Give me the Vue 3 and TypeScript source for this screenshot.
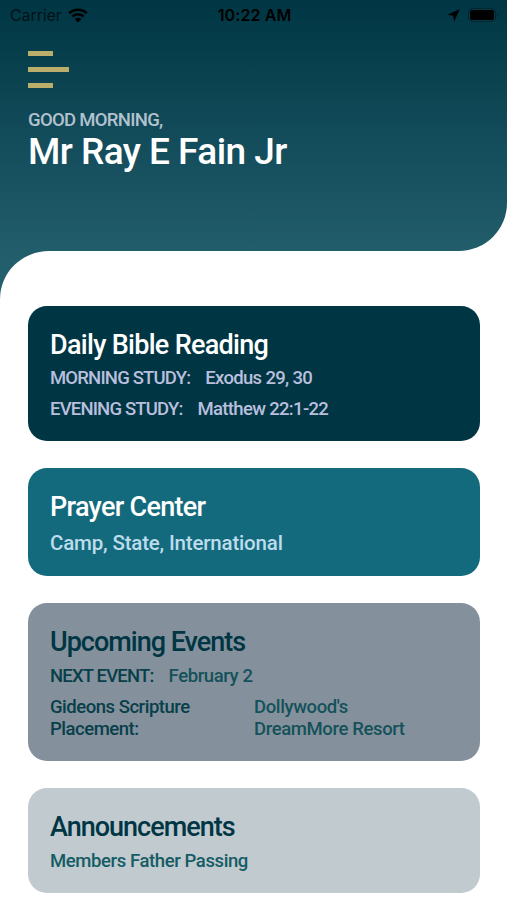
<script setup lang="ts">
interface Entry {
  label?: string
  value: string
}

interface Card {
  id: string
  title: string
  entries: Entry[]
  columns?: [string[], string[]]
}

const user = { greeting: 'GOOD MORNING,', name: 'Mr Ray E Fain Jr' }

const cards: Card[] = [
  {
    id: 'reading',
    title: 'Daily Bible Reading',
    entries: [
      { label: 'MORNING STUDY:', value: 'Exodus 29, 30' },
      { label: 'EVENING STUDY:', value: 'Matthew 22:1-22' },
    ],
  },
  {
    id: 'prayer',
    title: 'Prayer Center',
    entries: [{ value: 'Camp, State, International' }],
  },
  {
    id: 'events',
    title: 'Upcoming Events',
    entries: [{ label: 'NEXT EVENT:', value: 'February 2' }],
    columns: [
      ['Gideons Scripture', 'Placement:'],
      ['Dollywood\'s', 'DreamMore Resort'],
    ],
  },
  {
    id: 'announcements',
    title: 'Announcements',
    entries: [{ value: 'Members Father Passing' }],
  },
]
</script>

<template>
  <div class="screen">
    <header class="hero">
      <div class="status">
        <div class="carrier">
          <span>Carrier</span>
          <svg class="wifi" viewBox="0 0 20 15" width="20" height="15">
            <path d="M1.2 5.3C6.2.5 13.8.5 18.8 5.3" />
            <path d="M4.3 8.5C7.6 5.4 12.4 5.4 15.7 8.5" />
            <path class="dot" d="M6.6 11C8.6 9.2 11.4 9.2 13.4 11L10 14.5Z" />
          </svg>
        </div>
        <span class="clock">10:22 AM</span>
        <div class="indicators">
          <svg viewBox="0 0 12 12" width="13" height="13">
            <path d="M11.7.3L6.6 11.8L5.7 6.3L.2 5.4Z" />
          </svg>
          <svg viewBox="0 0 31 14" width="31" height="14">
            <rect class="shell" x=".5" y=".5" width="27" height="13" rx="3.5" />
            <rect x="2" y="2" width="24" height="10" rx="2" />
            <path class="cap" d="M29 4.7Q30.4 5.4 30.4 7T29 9.3Z" />
          </svg>
        </div>
      </div>
      <div class="menu"><i></i><i></i><i></i></div>
      <p class="greeting">{{ user.greeting }}</p>
      <h1 class="name">{{ user.name }}</h1>
    </header>
    <div class="backdrop">
      <main class="sheet">
        <section v-for="card in cards" :key="card.id" class="card" :class="card.id">
          <h2 class="title">{{ card.title }}</h2>
          <p v-for="entry in card.entries" :key="entry.value" class="entry">
            <span v-if="entry.label" class="label">{{ entry.label }}</span>
            <span class="value">{{ entry.value }}</span>
          </p>
          <div v-if="card.columns" class="columns">
            <div v-for="(lines, i) in card.columns" :key="i" class="column">
              <div v-for="line in lines" :key="line">{{ line }}</div>
            </div>
          </div>
        </section>
      </main>
    </div>
  </div>
</template>

<style>
body {
  background: #fff;
}
</style>

<style scoped>
.screen {
  height: 900px;
  overflow: hidden;
  font-family: Roboto, "Liberation Sans", sans-serif;
  font-weight: 500;
  white-space: nowrap;
}
h1, h2, p {
  margin: 0;
  font-weight: 500;
}
.hero {
  box-sizing: border-box;
  height: 251px;
  padding-left: 28px;
  background: linear-gradient(#003644, #225d6c);
  border-bottom-right-radius: 48px;
}
.status {
  display: grid;
  grid-template-columns: 1fr auto 1fr;
  align-items: center;
  height: 30px;
  margin-left: -28px;
  padding: 0 8px 0 10px;
  color: #000;
  font-family: Inter, sans-serif;
  font-size: 16px;
}
.carrier {
  display: flex;
  align-items: center;
  gap: 6px;
  color: #001218;
  font-weight: 400;
  letter-spacing: -0.1px;
}
.wifi {
  fill: none;
  stroke: #000;
  stroke-width: 2.6;
}
.wifi .dot {
  fill: #000;
  stroke: none;
}
.clock {
  font-weight: 600;
  letter-spacing: 0.1px;
}
.indicators {
  display: flex;
  justify-content: flex-end;
  align-items: center;
  gap: 8px;
}
.shell {
  fill: none;
  stroke: #002630;
}
.cap {
  fill: #002630;
}
.menu {
  display: grid;
  gap: 11px;
  padding-top: 21px;
}
.menu i {
  width: 25px;
  height: 5px;
  background: #bbae6b;
}
.menu i:nth-child(2) {
  width: 41px;
}
.greeting {
  margin-top: 20px;
  color: #b2c2cf;
  font-size: 18.5px;
  line-height: 24px;
  letter-spacing: -0.7px;
}
.name {
  color: #fff;
  font-size: 37px;
  line-height: 40px;
  letter-spacing: -0.55px;
}
.backdrop {
  background: linear-gradient(#225d6c, #25606f 48px, #fff 48px);
}
.sheet {
  display: grid;
  gap: 27px;
  padding: 55px 27px 7px 28px;
  background: #fff;
  border-top-left-radius: 49px 48px;
}
.card {
  box-sizing: border-box;
  padding: 21px 22px 0;
  border-radius: 19px;
  font-size: 18.5px;
}
.title {
  font-size: 27px;
  line-height: 36px;
  letter-spacing: -0.7px;
}
.entry {
  display: flex;
  gap: 15px;
  line-height: 31px;
  letter-spacing: -0.4px;
}
.label {
  letter-spacing: -0.82px;
}
.reading {
  height: 135px;
  background: #003644;
  color: #b9bfdd;
}
.reading .title {
  color: #fff;
}
.reading .value {
  letter-spacing: -0.67px;
}
.reading .entry + .entry {
  line-height: 30px;
}
.prayer {
  height: 108px;
  background: #146a7d;
  color: #bddcec;
}
.prayer .title {
  color: #fff;
}
.prayer .entry {
  font-size: 20.5px;
  line-height: 37px;
  letter-spacing: -0.18px;
}
.events {
  height: 158px;
  background: #84919c;
  color: #14515a;
}
.events .title,
.announcements .title {
  color: #003644;
  letter-spacing: -1px;
}
.events .entry,
.announcements .entry {
  line-height: 33px;
}
.events .label,
.column:first-child {
  color: #083f4b;
}
.columns {
  display: grid;
  grid-template-columns: 204px 1fr;
  margin-top: 3px;
  line-height: 22px;
  letter-spacing: -0.38px;
}
.column:first-child {
  letter-spacing: -0.48px;
}
.announcements {
  height: 105px;
  background: #c0cacf;
  color: #155c65;
}
</style>
